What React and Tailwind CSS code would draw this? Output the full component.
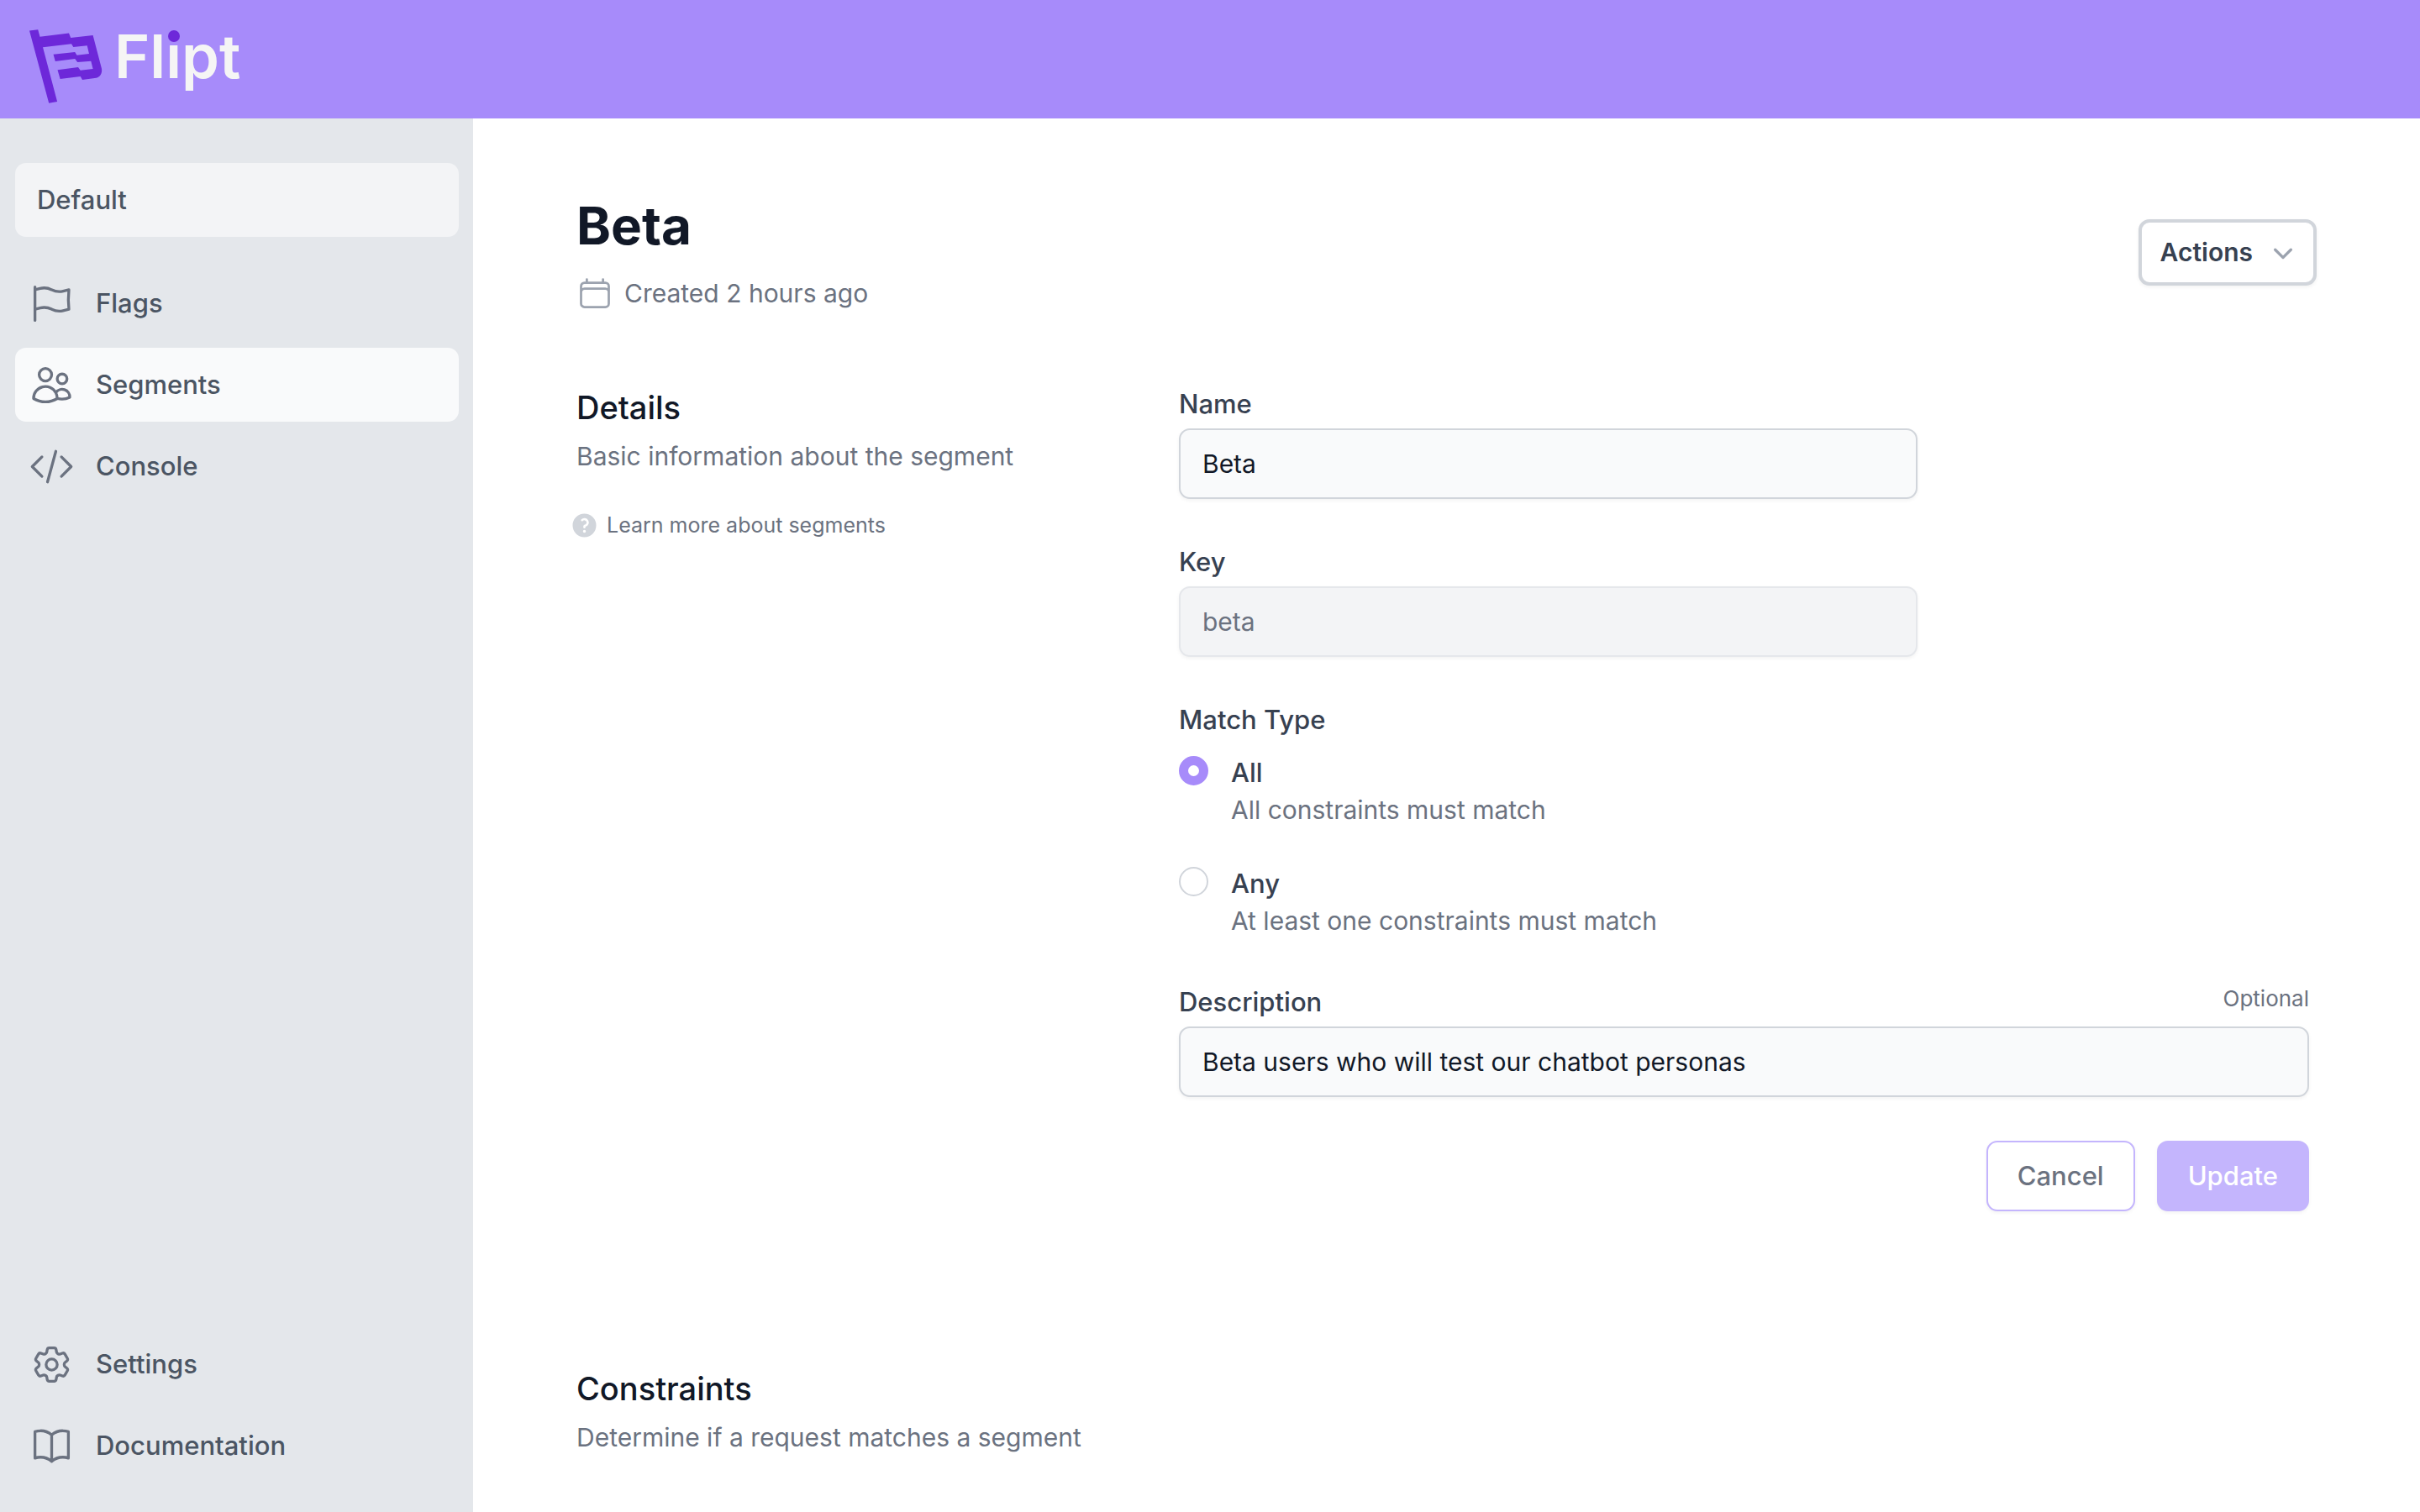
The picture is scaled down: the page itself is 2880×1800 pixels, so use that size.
import {
  HiOutlineFlag,
  HiOutlineUsers,
  HiOutlineCodeBracket,
  HiOutlineCog6Tooth,
  HiOutlineBookOpen,
  HiOutlineCalendar,
  HiMiniChevronDown,
  HiMiniQuestionMarkCircle,
} from "react-icons/hi2";

function Logo() {
  return (
    <a href="#home" className="flex items-start text-[#f5f5f5]">
      <svg viewBox="35 35 87 88" className="h-[88px] w-[87px] fill-[#6d28d9]" aria-hidden="true">
        <path d="M35 36.500L45.200 35.200L47.500 43.700L82 39.500L84.200 45L110.600 42L121 81.700C121.800 87 119.500 91.500 114.500 92.700L98 95L95.700 91L71.600 94L68.500 83.300L93 80L95.700 83.700L110.600 82L108.300 72.700L92.200 74L89.200 70L65.800 73L63.500 64.700L89.200 62L91.500 65.700L106 64L103.700 54.300L87.300 56L85 52.300L51 56.300L68.100 121L58.200 122.700Z" />
      </svg>
      <span className="ml-[14px] text-[72px] leading-[64px] font-semibold">
        Fl
        <span className="relative">
          i
          <span className="absolute top-[13px] left-1/2 size-[14px] -translate-x-1/2 rounded-full bg-[#6d28d9]" />
        </span>
        pt
      </span>
    </a>
  );
}

function NavItem({ icon: Icon, label, active }) {
  return (
    <a
      href={"#" + label.toLowerCase()}
      aria-current={active ? "page" : undefined}
      className={
        "flex h-[88px] items-center gap-[26px] rounded-[13px] px-[17px] text-[31px] font-medium text-[#4b5563] " +
        (active ? "bg-[#f9fafb]" : "")
      }
    >
      <Icon className="size-[53px] text-[#6b7280]" />
      {label}
    </a>
  );
}

function Field({ id, label, value, disabled, hint, className }) {
  return (
    <div className={className}>
      <div className="flex justify-between">
        <label htmlFor={id} className="text-[31px] leading-[44px] font-medium text-[#374151]">
          {label}
        </label>
        {hint && <span className="text-[26px] leading-[35px] text-[#6b7280]">{hint}</span>}
      </div>
      <input
        id={id}
        type="text"
        defaultValue={value}
        disabled={disabled}
        className="mt-[7px] h-[84px] w-full rounded-[13px] border-2 border-[#d1d5db] bg-[#f9fafb] px-[26px] text-[30px] text-[#111827] shadow-[0_2px_4px_rgba(0,0,0,0.05)] disabled:border-[#e5e7eb] disabled:bg-[#f3f4f6] disabled:text-[#6b7280]"
      />
    </div>
  );
}

function MatchOption({ id, label, hint, checked }) {
  return (
    <div className="flex gap-[27px]">
      <input
        id={id}
        type="radio"
        name="matchType"
        defaultChecked={checked}
        aria-describedby={id + "-hint"}
        className="mt-[2px] size-[35px] shrink-0 appearance-none rounded-full border-2 border-[#d1d5db] bg-white checked:border-[11px] checked:border-[#a78bfa]"
      />
      <div className="leading-[44px]">
        <label htmlFor={id} className="block text-[31px] font-medium text-[#374151]">
          {label}
        </label>
        <p id={id + "-hint"} className="text-[30px] text-[#6b7280]">
          {hint}
        </p>
      </div>
    </div>
  );
}

function SectionIntro({ title, text }) {
  return (
    <div>
      <h2 className="text-[38px] leading-[53px] font-medium text-[#111827]">{title}</h2>
      <p className="mt-[9px] text-[30px] leading-[44px] text-[#6b7280]">{text}</p>
    </div>
  );
}

export default function App() {
  return (
    <div className="flex min-h-screen flex-col bg-white font-['Inter',sans-serif]">
      <header className="flex h-[141px] items-start bg-[#a78bfa] px-[35px] pt-[35px]">
        <Logo />
      </header>
      <div className="flex flex-1">
        <aside className="flex w-[563px] shrink-0 flex-col bg-[#e4e7eb] pt-[53px] pr-[17px] pb-[35px] pl-[18px]">
          <button
            type="button"
            className="h-[88px] rounded-[13px] bg-[#f3f4f6] px-[26px] text-left text-[31px] font-medium text-[#4b5563]"
          >
            Default
          </button>
          <nav className="mt-[35px] flex flex-1 flex-col gap-[9px]">
            <NavItem icon={HiOutlineFlag} label="Flags" />
            <NavItem icon={HiOutlineUsers} label="Segments" active />
            <NavItem icon={HiOutlineCodeBracket} label="Console" />
          </nav>
          <nav className="flex flex-col gap-[9px]">
            <NavItem icon={HiOutlineCog6Tooth} label="Settings" />
            <NavItem icon={HiOutlineBookOpen} label="Documentation" />
          </nav>
        </aside>
        <main className="flex-1 px-[123px] pt-[88px]">
          <div className="flex items-center justify-between">
            <div>
              <h1 className="text-[62px] leading-[80px] font-bold text-[#111827]">Beta</h1>
              <p className="mt-[18px] flex items-center gap-[13px] text-[30px] leading-[44px] text-[#6b7280]">
                <HiOutlineCalendar className="size-[44px] text-[#9ca3af]" />
                Created 2 hours ago
              </p>
            </div>
            <button
              type="button"
              className="flex h-[79px] items-center gap-[14px] rounded-[13px] border-4 border-[#d1d5db] bg-white pr-[14px] pl-[22px] text-[30px] font-semibold text-[#374151] shadow-[0_2px_4px_rgba(0,0,0,0.05)]"
            >
              Actions
              <HiMiniChevronDown className="size-[44px] text-[#9ca3af]" />
            </button>
          </div>

          <section className="mt-[88px] grid grid-cols-3 gap-[53px]">
            <div>
              <SectionIntro title="Details" text="Basic information about the segment" />
              <a
                href="#learn"
                className="mt-[43px] -ml-[8px] flex items-center gap-[9px] text-[25px] leading-[35px] text-[#6b7280]"
              >
                <HiMiniQuestionMarkCircle className="size-[35px] text-[#d1d5db]" />
                Learn more about segments
              </a>
            </div>
            <form className="col-span-2 px-[9px]">
              <div className="grid grid-cols-3 gap-[53px]">
                <Field id="name" label="Name" value="Beta" className="col-span-2" />
                <Field id="key" label="Key" value="beta" disabled className="col-span-2" />
                <fieldset className="col-span-3">
                  <legend className="text-[31px] leading-[44px] font-medium text-[#374151]">Match Type</legend>
                  <div className="mt-[19px] flex flex-col gap-[44px]">
                    <MatchOption id="all" label="All" hint="All constraints must match" checked />
                    <MatchOption id="any" label="Any" hint="At least one constraints must match" />
                  </div>
                </fieldset>
                <Field
                  id="description"
                  label="Description"
                  value="Beta users who will test our chatbot personas"
                  hint="Optional"
                  className="col-span-3"
                />
              </div>
              <div className="mt-[52px] flex justify-end gap-[26px] text-[31px] font-medium">
                <button
                  type="button"
                  className="h-[84px] rounded-[13px] border-2 border-[#c4b5fd] bg-white px-[35px] text-[#6b7280] shadow-[0_2px_4px_rgba(0,0,0,0.05)]"
                >
                  Cancel
                </button>
                <button
                  type="submit"
                  disabled
                  className="h-[84px] rounded-[13px] border-2 border-[#c4b5fd] bg-[#c4b5fd] px-[35px] text-white shadow-[0_2px_4px_rgba(0,0,0,0.05)]"
                >
                  Update
                </button>
              </div>
            </form>
          </section>

          <section className="mt-[185px]">
            <SectionIntro title="Constraints" text="Determine if a request matches a segment" />
          </section>
        </main>
      </div>
    </div>
  );
}
